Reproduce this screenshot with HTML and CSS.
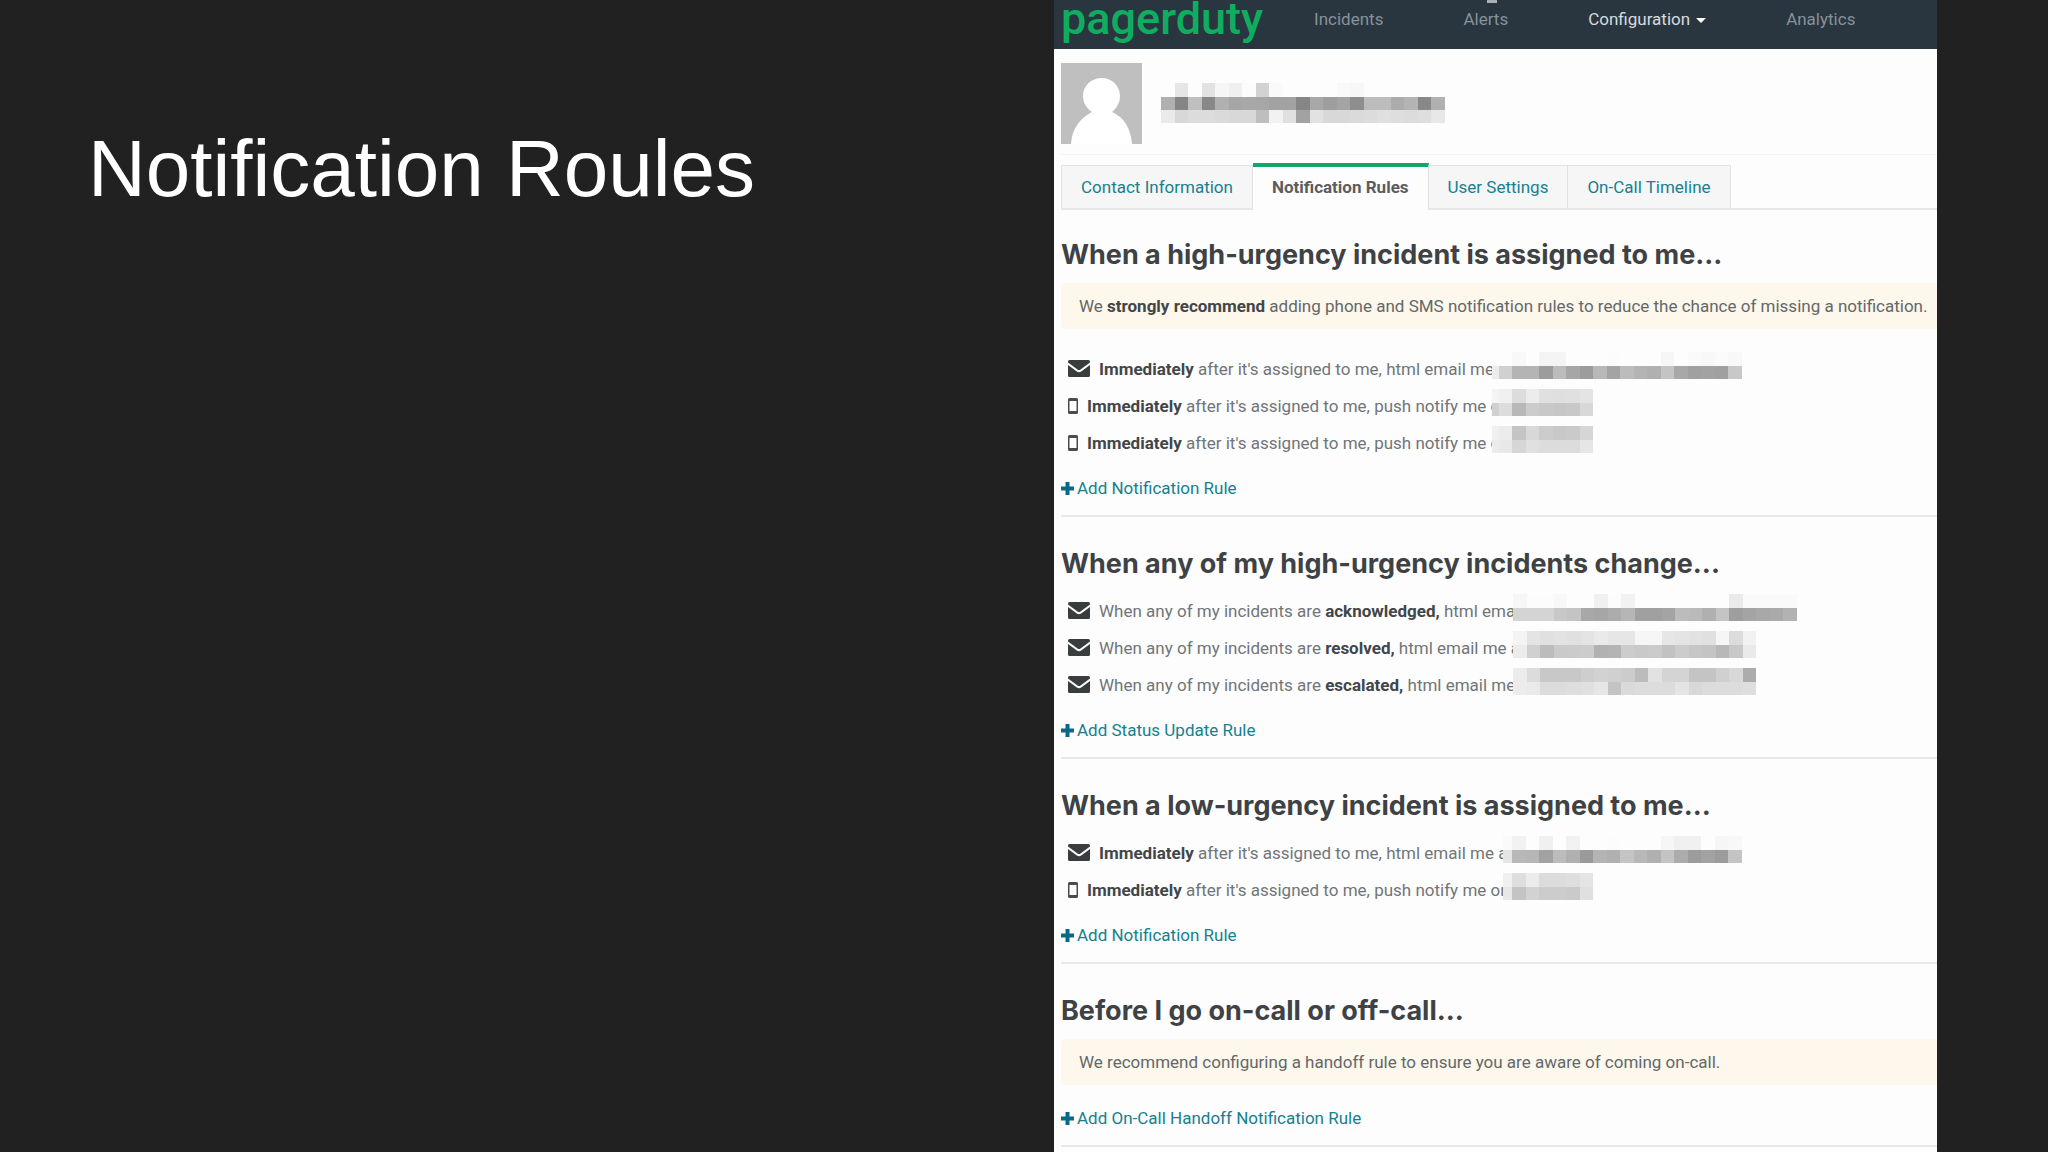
FILE: index.html
```html
<!DOCTYPE html>
<html lang="en">
<head>
    <meta charset="UTF-8">
    <meta name="viewport" content="width=device-width, initial-scale=1.0">
    <title>Notification Roules</title>
    <link rel="stylesheet" href="styles.css">
</head>
<body>
    <!-- shared icons -->
    <svg class="sprite" aria-hidden="true">
        <symbol id="mail" viewBox="0 0 22 17">
            <path d="M1.500 0H20.500Q22 0 22 1.500V2.500L12.500 9.500Q11 10.500 9.500 9.500L0 2.500V1.500Q0 0 1.500 0Z"/>
            <path d="M0 5L8.500 11.300Q11 13 13.500 11.300L22 5V15.500Q22 17 20.500 17H1.500Q0 17 0 15.500Z"/>
        </symbol>
        <symbol id="phone" viewBox="0 0 10 16">
            <path fill-rule="evenodd" d="M1.500 0H8.500Q10 0 10 1.500V14.500Q10 16 8.500 16H1.500Q0 16 0 14.500V1.500Q0 0 1.500 0ZM1.500 3V13H8.500V3Z"/>
        </symbol>
        <symbol id="plus" viewBox="0 0 13 13">
            <path d="M4.500 0H8.500V4.500H13V8.500H8.500V13H4.500V8.500H0V4.500H4.500Z"/>
        </symbol>
    </svg>

    <div class="slide">
        <h1 class="slide-title">Notification Roules</h1>

        <main class="app">
            <header class="navbar">
                <a class="logo" href="#">pagerduty</a>
                <nav class="nav-links">
                    <a href="#">Incidents</a>
                    <a class="has-badge" href="#">Alerts</a>
                    <a class="current" href="#">Configuration<span class="caret"></span></a>
                    <a href="#">Analytics</a>
                </nav>
            </header>

            <div class="profile">
                <svg class="avatar" viewBox="0 0 81 81" aria-label="Profile picture">
                    <rect width="81" height="81" fill="#bfbfc0"/>
                    <path fill="#fff" d="M10 81C11 66 19 55 31 49C25 45 22 39 22 33C22 23 30 15 41 15C51 15 59 23 59 33C59 39 56 45 51 49C63 54 70 66 71 81Z"/>
                </svg>
                <svg class="mosaic" data-rows="fde6fde2f6f0fcd2fafdfdfdfdf9f7fdfdfdfdfdfd b085bf88b0a6a8a6a2a286a89ea48ebcbcacb488b0 ead8dcdcdad8d8bef2e0a2e2d8d8dadce0dedcdee8"></svg>
            </div>

            <nav class="tabs">
                <a href="#">Contact Information</a>
                <a class="active" href="#">Notification Rules</a>
                <a href="#">User Settings</a>
                <a href="#">On-Call Timeline</a>
            </nav>

            <section class="rules assigned">
                <h2>When a high-urgency incident is assigned to me...</h2>
                <p class="alert">We <strong>strongly recommend</strong> adding phone and SMS notification rules to reduce the chance of missing a notification.</p>
                <ul>
                    <li>
                        <svg class="mail"><use href="#mail"/></svg>
                        <span><strong>Immediately</strong> after it's assigned to me, html email me</span>
                        <svg class="mosaic" data-skip="0.5" data-rows="fdfdf8fdf4f4fdfdfdfcfdfdfdf6fdfaf8fbf8 ecd0b4b49cbca69cb8a4bcb4b0c4a8a0a2a0c8"></svg>
                    </li>
                    <li>
                        <svg class="phone"><use href="#phone"/></svg>
                        <span><strong>Immediately</strong> after it's assigned to me, push notify me o</span>
                        <svg class="mosaic" data-skip="0.5" data-rows="f4f0dcece0dfe0e4 d0dcb8ccc8c6c8d8"></svg>
                    </li>
                    <li>
                        <svg class="phone"><use href="#phone"/></svg>
                        <span><strong>Immediately</strong> after it's assigned to me, push notify me o</span>
                        <svg class="mosaic" data-skip="0.5" data-rows="f0ecc4d8ccc8cad6 ece8d6e0dcdcdce6"></svg>
                    </li>
                </ul>
                <a class="add" href="#"><svg class="plus"><use href="#plus"/></svg>Add Notification Rule</a>
            </section>

            <section class="rules changed">
                <h2>When any of my high-urgency incidents change...</h2>
                <ul>
                    <li>
                        <svg class="mail"><use href="#mail"/></svg>
                        <span>When any of my incidents are <strong>acknowledged,</strong> html ema</span>
                        <svg class="mosaic" data-rows="f6fcfcf8fdfdf0fcf2fdfdfdfdfdfdfdeafafafafa d4d4d4c8c4a8a6acb6a0a0a4bcbab0c49ea4a8aab2"></svg>
                    </li>
                    <li>
                        <svg class="mail"><use href="#mail"/></svg>
                        <span>When any of my incidents are <strong>resolved,</strong> html email me a</span>
                        <svg class="mosaic" data-rows="f4e4e0e2e0e4eae6e6f6f6e6e4e2e0f6dcf2 ecd0bccacbccb2b4ccc9cbc2ccc6c4b8c8ea"></svg>
                    </li>
                    <li>
                        <svg class="mail"><use href="#mail"/></svg>
                        <span>When any of my incidents are <strong>escalated,</strong> html email me</span>
                        <svg class="mosaic" data-rows="ecdcc8c8c8ced2d0ccbce2d4d4c4c4d0d8ac eceadcdcdee0e6c4dadcdcdce4d8dcdcdcde"></svg>
                    </li>
                </ul>
                <a class="add" href="#"><svg class="plus"><use href="#plus"/></svg>Add Status Update Rule</a>
            </section>

            <section class="rules low">
                <h2>When a low-urgency incident is assigned to me...</h2>
                <ul>
                    <li>
                        <svg class="mail"><use href="#mail"/></svg>
                        <span><strong>Immediately</strong> after it's assigned to me, html email me a</span>
                        <svg class="mosaic" data-skip="0.3" data-rows="faf2fdf0fdf2fdfdfcfdfdfdf6f0f0fdf6f8 e4b8b6a2bcb09ab4b0c4b8b0c4ac9ca29cc4"></svg>
                    </li>
                    <li>
                        <svg class="phone"><use href="#phone"/></svg>
                        <span><strong>Immediately</strong> after it's assigned to me, push notify me on</span>
                        <svg class="mosaic" data-skip="0.3" data-rows="f0deecdcdcdee4 e8c4d2cccccae0"></svg>
                    </li>
                </ul>
                <a class="add" href="#"><svg class="plus"><use href="#plus"/></svg>Add Notification Rule</a>
            </section>

            <section class="rules">
                <h2>Before I go on-call or off-call...</h2>
                <p class="alert">We recommend configuring a handoff rule to ensure you are aware of coming on-call.</p>
                <a class="add" href="#"><svg class="plus"><use href="#plus"/></svg>Add On-Call Handoff Notification Rule</a>
            </section>
        </main>
    </div>

    <script src="mosaic.js"></script>
</body>
</html>
```

FILE: styles.css
```css
* {
    box-sizing: border-box;
}

body {
    margin: 0;
    background-color: #212121;
    font-family: Roboto, Arial, sans-serif;
    font-size: 17px;
    line-height: 24px;
    color: #63686a;
}

a {
    color: #16808f;
    text-decoration: none;
}

svg {
    flex: none;
    fill: currentColor;
}

strong {
    color: #424648;
}

.sprite {
    display: none;
}

.slide {
    display: grid;
    grid-template-columns: 1054fr 883fr 111fr;
    height: 100vh;
    overflow: hidden;
}

.slide-title {
    margin: 0;
    padding: 123px 0 0 88px;
    font-family: "Liberation Sans", Arial, sans-serif;
    font-size: 80px;
    font-weight: normal;
    line-height: 92px;
    color: #fff;
}

.app {
    min-width: 0;
    background-color: #fdfdfe;
}

/* top bar */
.navbar {
    display: flex;
    align-items: center;
    height: 49px;
    padding-left: 7px;
    padding-bottom: 12px;
    background-color: #293640;
}

.logo {
    margin-right: 51px;
    font-size: 45px;
    font-weight: 500;
    line-height: 36px;
    color: #0fad5f;
}

.nav-links {
    display: flex;
    gap: 80px;
}

.nav-links a {
    color: #87929a;
}

.nav-links .current {
    color: #d5dbdf;
}

.has-badge {
    position: relative;
}

.has-badge::before {
    content: "";
    position: absolute;
    top: -8px;
    left: 24px;
    width: 10px;
    height: 4px;
    background-color: #a9b1b6;
}

.caret {
    display: inline-block;
    margin-left: 6px;
    border: 5px solid transparent;
    border-top-color: #fff;
    border-bottom: 0;
    vertical-align: middle;
}

/* user */
.profile {
    display: flex;
    align-items: center;
    gap: 19px;
    height: 106px;
    margin-left: 7px;
    padding-top: 3px;
    border-bottom: 1px solid #f2f3f5;
}

.avatar {
    width: 81px;
    height: 81px;
}

.tabs {
    display: flex;
    margin: 8px 0 -2px 7px;
    border-bottom: 2px solid #e6e7e9;
}

.tabs a {
    margin-top: 2px;
    padding: 9px 19px;
    background-color: #f6f6f7;
    border: 1px solid #e0e1e3;
    border-left-width: 0;
    border-bottom: 0;
}

.tabs a:first-child {
    border-left-width: 1px;
}

.tabs .active {
    margin: 0 0 -2px;
    padding-top: 8px;
    background-color: #fdfdfe;
    border-top: 4px solid #12a768;
    font-weight: bold;
    color: #5c5c5e;
}

/* rule lists */
.rules {
    margin-left: 7px;
    padding: 29px 0 15px;
    border-bottom: 2px solid #e9e9ed;
}

.rules h2 {
    margin: 0 0 10px;
    font-family: Inter, Arial, sans-serif;
    font-size: 27px;
    font-weight: 700;
    line-height: 36px;
    color: #3e4244;
}

.alert {
    margin: 0 0 21px;
    padding: 11px 18px;
    background-color: #fdf7ec;
    border-radius: 4px 0 0 4px;
    white-space: nowrap;
}

.rules ul {
    margin: 0;
    padding: 0;
    list-style: none;
}

.rules li {
    display: flex;
    align-items: center;
    gap: 9px;
    position: relative;
    height: 37px;
    padding-left: 7px;
    color: #707577;
    white-space: nowrap;
}

.mail {
    width: 22px;
    height: 17px;
    color: #3a3d3e;
}

.phone {
    width: 10px;
    height: 16px;
    color: #4a4d4e;
}

.add {
    display: flex;
    align-items: center;
    gap: 3px;
    margin-top: 15px;
}

.plus {
    width: 13px;
    height: 13px;
    color: #086a86;
}

/* blurred out names lie over the end of each rule */
.rules .mosaic {
    position: absolute;
    top: 2px;
}

.assigned .mosaic {
    left: 431px;
}

.changed .mosaic {
    left: 452px;
}

.low .mosaic {
    left: 442px;
}
```

FILE: mosaic.js
```js
const CELL = 13.5;

// every two hex digits are one grey cell, a space starts a new row
document.querySelectorAll(".mosaic").forEach(svg => {
    const skip = parseFloat(svg.dataset.skip || 0);
    const rows = svg.dataset.rows.split(" ").map(row => row.match(/../g));
    const width = rows[0].length - skip;

    svg.setAttribute("viewBox", `${skip} 0 ${width} ${rows.length}`);
    svg.setAttribute("width", width * CELL);
    svg.setAttribute("height", rows.length * CELL);
    svg.setAttribute("shape-rendering", "crispEdges");
    svg.innerHTML = rows.map((row, y) => row.map((grey, x) =>
        `<rect x="${x}" y="${y}" width="1" height="1" fill="#${grey.repeat(3)}"/>`
    ).join("")).join("");
});
```
